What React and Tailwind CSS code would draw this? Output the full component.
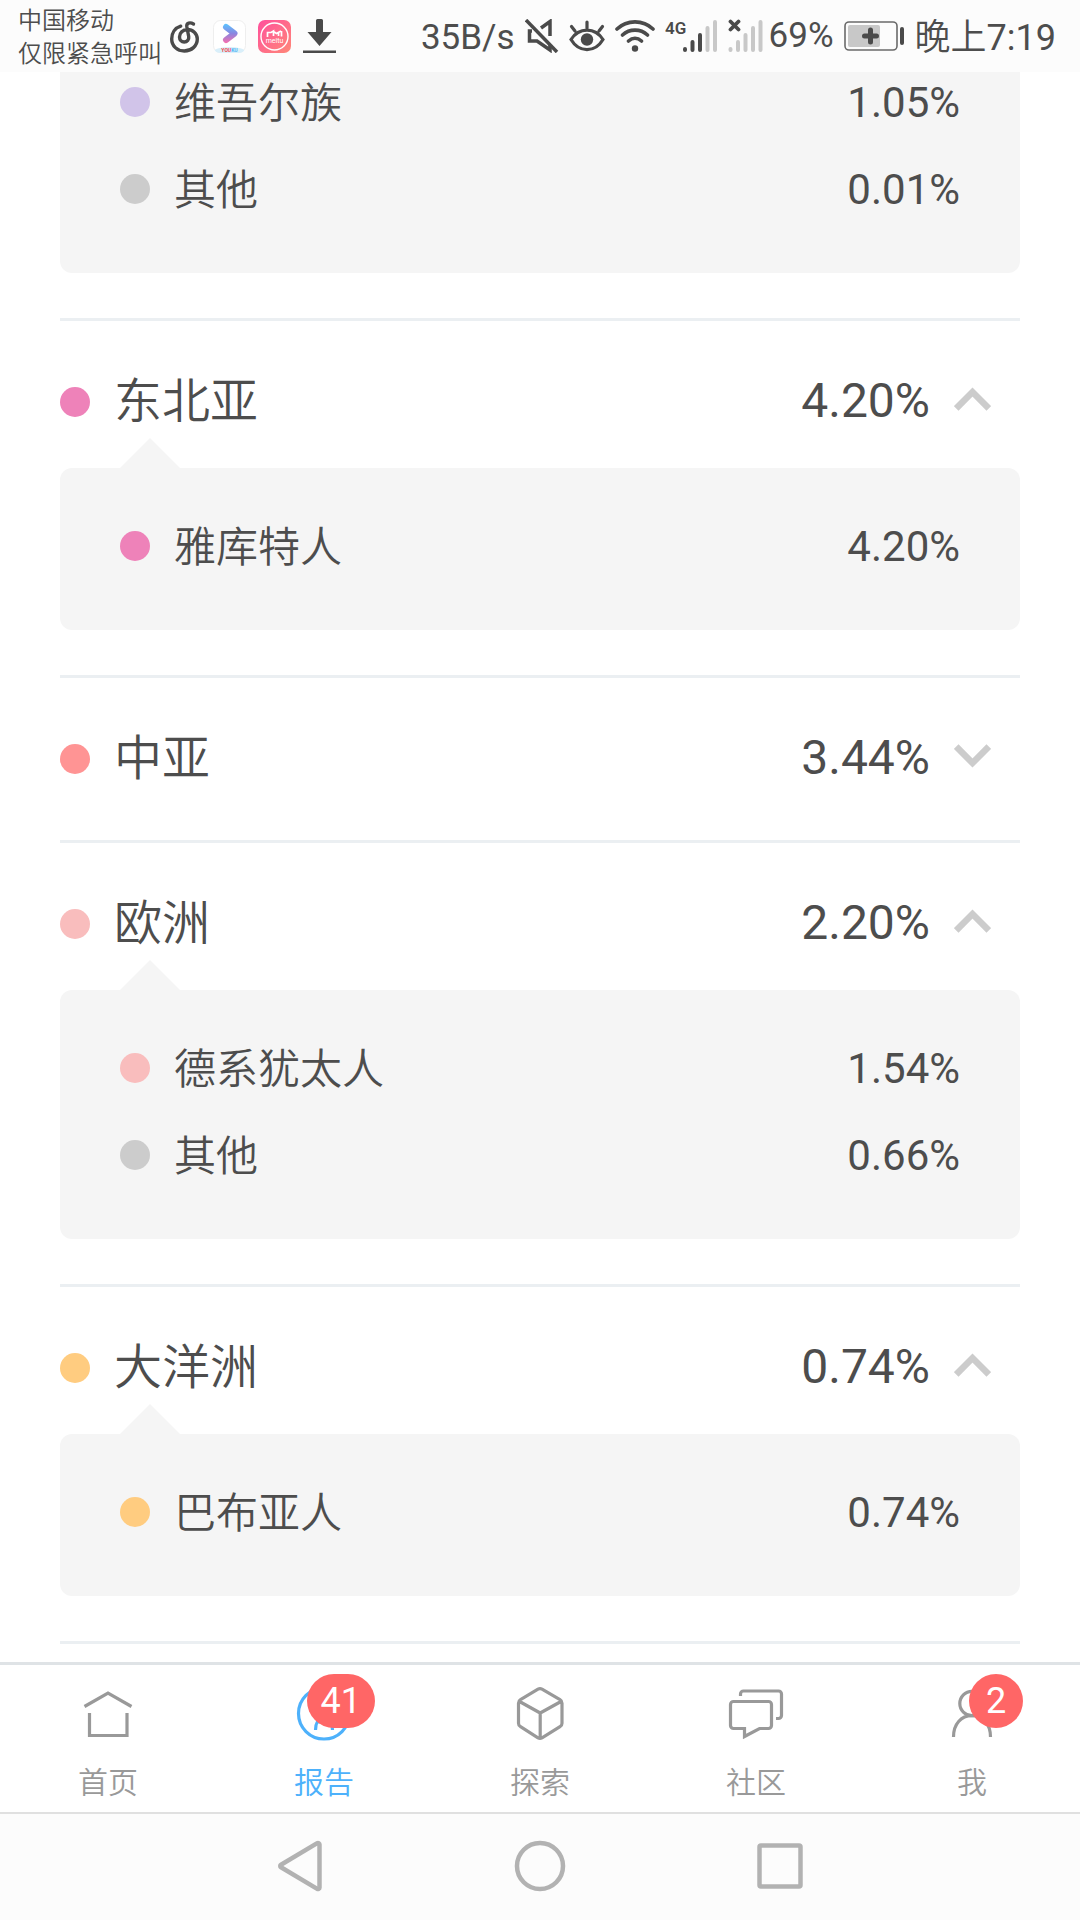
import React, { useState } from 'react';

const GROUPS = [
  {
    name: '东北亚',
    value: '4.20%',
    dot: 'bg-[#ee82b9]',
    open: true,
    items: [{ name: '雅库特人', value: '4.20%', dot: 'bg-[#ee82b9]' }],
  },
  {
    name: '中亚',
    value: '3.44%',
    dot: 'bg-[#ff9494]',
    open: false,
    items: [],
  },
  {
    name: '欧洲',
    value: '2.20%',
    dot: 'bg-[#f9bdbd]',
    open: true,
    items: [
      { name: '德系犹太人', value: '1.54%', dot: 'bg-[#f9bdbd]' },
      { name: '其他', value: '0.66%', dot: 'bg-[#cccccc]' },
    ],
  },
  {
    name: '大洋洲',
    value: '0.74%',
    dot: 'bg-[#ffcc80]',
    open: true,
    items: [{ name: '巴布亚人', value: '0.74%', dot: 'bg-[#ffcc80]' }],
  },
];

const EAST_ASIA_REST = [
  { name: '维吾尔族', value: '1.05%', dot: 'bg-[#d1c4e9]' },
  { name: '其他', value: '0.01%', dot: 'bg-[#cccccc]' },
];

const StatusBar = () => (
  <header className="relative z-10 flex h-[72px] shrink-0 items-center bg-[#fcfcfc] pl-[18px] pr-6 text-[35px] text-[#4d4d4d]">
    <div className="pt-1 text-2xl leading-[33px] font-[350]">
      <p>中国移动</p>
      <p>仅限紧急呼叫</p>
    </div>
    <div className="ml-[6px] flex items-center gap-3">
      {/* music */}
      <svg viewBox="0 0 33 33" className="size-[33px]" fill="none" stroke="#4a4a4a" strokeWidth="3.4" strokeLinecap="round">
        <path d="M12.700 6.200C7 8 3.700 13 3.700 19c0 7 5.500 12 12.600 12s13-5 13-12c0-5.500-4.500-9.500-10-9.500-4.500 0-7.800 3.500-7.800 7.500 0 3 2 5 4.700 5 3 0 5-2.500 4.500-5.500L18.800 6.500C18.300 3 22 1.800 25.500 4" />
      </svg>
      {/* video */}
      <svg viewBox="0 0 33 33" className="size-[33px]">
        <defs>
          <linearGradient id="play" gradientUnits="userSpaceOnUse" x1="12" y1="4" x2="12" y2="23">
            <stop offset="0" stopColor="#5cc3ff" />
            <stop offset=".5" stopColor="#8a86e0" />
            <stop offset="1" stopColor="#f66fae" />
          </linearGradient>
          <clipPath id="tile">
            <rect width="33" height="33" rx="7" />
          </clipPath>
        </defs>
        <rect x=".5" y=".5" width="32" height="32" rx="7" fill="#fff" stroke="#eee" />
        <path d="M13 7l8.500 6.500L13 20" fill="none" stroke="url(#play)" strokeWidth="6" strokeLinecap="round" strokeLinejoin="round" />
        <ellipse cx="16.500" cy="31" rx="15" ry="4" fill="#d9effa" clipPath="url(#tile)" />
        <text x="16.500" y="31.500" fontSize="5" fontWeight="700" textAnchor="middle" fill="#f04a4a">YOU<tspan fill="#4db4f5">KU</tspan></text>
      </svg>
      {/* camera */}
      <svg viewBox="0 0 33 33" className="size-[33px]">
        <defs>
          <linearGradient id="pink" x1="0" y1="0" x2="1" y2="1">
            <stop offset="0" stopColor="#ff4f9c" />
            <stop offset="1" stopColor="#ff8878" />
          </linearGradient>
        </defs>
        <rect width="33" height="33" rx="7" fill="url(#pink)" />
        <circle cx="16.500" cy="16.500" r="13.500" fill="none" stroke="#fff" strokeWidth="1.400" />
        <path d="M9.500 17v-4.500h3.500l2.500-1.500v5M15.500 11.500l3 2 4.500-2.500M20.500 12.500V16M23.500 11v5.500" fill="none" stroke="#fff" strokeWidth="1.700" />
        <text x="16.500" y="23" fontSize="7" textAnchor="middle" fill="#fff">meitu</text>
      </svg>
      {/* download */}
      <svg viewBox="0 0 33 34" className="h-[34px] w-[33px]" fill="#4a4a4a">
        <path d="M14.500 0h4a1.500 1.500 0 0 1 1.500 1.500V13h8.500L16.500 27 4.500 13H13V1.500A1.500 1.500 0 0 1 14.500 0z" />
        <rect y="31.500" width="33" height="2.500" />
      </svg>
    </div>

    <div className="ml-auto flex items-center gap-[10px]">
      <span className="pt-1">35B/s</span>
      {/* muted */}
      <svg viewBox="0 0 34 34" className="size-[34px]" fill="none" stroke="#4a4a4a" strokeWidth="3.500">
        <path d="M7 12H4.500v10H12L25 31V26M16 9l9-6.500V17" />
        <path d="M1 1l31 32" />
      </svg>
      {/* eye care */}
      <svg viewBox="0 0 36 34" className="h-[34px] w-[36px]" fill="none" stroke="#4a4a4a" strokeWidth="3.200" strokeLinecap="round">
        <path d="M2 20.500C10 8 26 8 34 20.500 26 34 10 34 2 20.500zM18 9V3M6 12L2.500 7.500M30 12l3.500-4.500" />
        <circle cx="18" cy="20.500" r="6.200" fill="#4a4a4a" stroke="none" />
      </svg>
      {/* wifi */}
      <svg viewBox="0 0 40 34" className="h-[34px] w-[40px]" fill="none" stroke="#4a4a4a" strokeWidth="3.600" strokeLinecap="round">
        <path d="M2 10C12 .5 28 .5 38 10M7.500 16c7-6.500 18-6.500 25 0M13.500 22c4-3.500 9-3.500 13 0" />
        <circle cx="20" cy="29.500" r="3.200" fill="#4a4a4a" stroke="none" />
      </svg>
      {/* sim 1 */}
      <svg viewBox="0 0 53 34" className="h-[34px] w-[53px]" fill="none" strokeWidth="4" strokeLinecap="round">
        <path d="M20 30v1M27.500 23v8M35 16v15" stroke="#4a4a4a" />
        <path d="M42.500 9v22M50 3v28" stroke="#c8c8c8" />
        <text x="0" y="15" fontSize="17" fontWeight="600" fill="#4a4a4a">4G</text>
      </svg>
      <div className="flex items-center gap-[6px]">
        {/* sim 2 */}
        <svg viewBox="0 0 35 34" className="h-[34px] w-[35px]" fill="none" stroke="#c8c8c8" strokeWidth="4" strokeLinecap="round">
          <path d="M2.500 30v1M10 23v8M17.500 16v15M25 9v22M32.500 3v28" />
          <path d="M2.500 2.500l8 8M10.500 2.500l-8 8" stroke="#4a4a4a" strokeWidth="3.800" />
        </svg>
        <span>69%</span>
      </div>
      {/* battery */}
      <svg viewBox="0 0 61 30" className="h-[30px] w-[61px]">
        <rect x="1" y="1" width="52" height="28" rx="4" fill="none" stroke="#6a6a6a" strokeWidth="1.600" />
        <rect x="4" y="4" width="32" height="22" rx="2" fill="#c8c8c8" />
        <rect x="56" y="6" width="4" height="18" rx="2" fill="#4a4a4a" />
        <path d="M20.500 15h12M26.500 9v12" stroke="#4a4a4a" strokeWidth="5" strokeLinecap="round" />
      </svg>
      <span className="pt-1 text-4xl font-[350]">
        晚上<span className="font-normal">7:19</span>
      </span>
    </div>
  </header>
);

const Item = ({ name, value, dot }) => (
  <li className="flex h-[87px] items-center text-[42px] leading-[60px]">
    <span className={`mr-6 size-[30px] rounded-full ${dot}`} />
    <span className="pt-1 font-[350]">{name}</span>
    <span className="ml-auto pt-[2px]">{value}</span>
  </li>
);

const Chevron = ({ open }) => (
  <svg viewBox="0 0 37 24" className="mb-[6px] h-6 w-[37px]" fill="none" stroke="#cccccc" strokeWidth="6.500">
    <path d={open ? 'M2.200 21.500L18.500 5l16.300 16.500' : 'M2.200 2.500L18.500 19 34.800 2.500'} />
  </svg>
);

const Group = ({ group }) => {
  const [open, setOpen] = useState(group.open);

  return (
    <section className={`border-b-[3px] border-[#ebeff2] ${open ? 'pb-[45px]' : ''}`}>
      <button
        type="button"
        onClick={() => setOpen(!open)}
        className={`flex w-full items-center pr-[29px] text-5xl ${open ? 'h-[147px] pt-[15px]' : 'h-[162px]'}`}
      >
        <span className={`mr-6 size-[30px] rounded-full ${group.dot}`} />
        <span className="font-[350]">{group.name}</span>
        <span className="mr-6 ml-auto pb-[2px]">{group.value}</span>
        <Chevron open={open} />
      </button>
      {open && (
        <div className="relative rounded-xl bg-[#f5f5f5] px-[60px] pt-[34px] pb-[41px]">
          <svg viewBox="0 0 60 30" className="absolute -top-[30px] left-[60px] h-[30px] w-[60px]" fill="#f5f5f5">
            <path d="M0 30L30 0l30 30z" />
          </svg>
          <ul>
            {group.items.map((item) => (
              <Item key={item.name} {...item} />
            ))}
          </ul>
        </div>
      )}
    </section>
  );
};

const HomeIcon = () => (
  <path d="M6.500 22.500L30 9l23.500 13.500M11.500 29v22.500h37.500V29" />
);

const ReportIcon = () => (
  <>
    <circle cx="30" cy="29.500" r="25.500" />
    <path d="M21.500 46c0-8 3-12 8.500-16s8.500-8 8.500-16M21.500 14c0 8 3 12 8.500 16s8.500 8 8.500 16M24 38h12" />
  </>
);

const CubeIcon = () => (
  <path
    d="M28 5.200a4 4 0 0 1 4 0L50 15.700a4 4 0 0 1 2 3.500v20a4 4 0 0 1-2 3.500L32 53.800a4 4 0 0 1-4 0L10.500 42.700a4 4 0 0 1-2-3.500v-20a4 4 0 0 1 2-3.500zM9.500 17.500L30.200 29l20.800-11.500M30.200 29v25"
    strokeLinejoin="round"
  />
);

const ChatIcon = () => (
  <>
    <path d="M7.500 17.500h35a3 3 0 0 1 3 3v21a3 3 0 0 1-3 3H33.500L18.500 52.500v-8H7.500a3 3 0 0 1-3-3v-21a3 3 0 0 1 3-3z" />
    <path d="M14.500 12v-2a3 3 0 0 1 3-3h35a3 3 0 0 1 3 3v21.500a3 3 0 0 1-3 3H50" />
  </>
);

const UserIcon = () => (
  <>
    <circle cx="30" cy="19.500" r="12.200" />
    <path d="M11.500 53C11.500 40 19 31.700 30 31.700S48.500 40 48.500 53" />
  </>
);

const TABS = [
  { label: '首页', icon: HomeIcon },
  { label: '报告', icon: ReportIcon, badge: 41, active: true },
  { label: '探索', icon: CubeIcon },
  { label: '社区', icon: ChatIcon },
  { label: '我', icon: UserIcon, badge: 2 },
];

const TabBar = () => (
  <nav className="grid shrink-0 grid-cols-5 border-t-[3px] border-[#dfe3e6] bg-white">
    {TABS.map(({ label, icon: Icon, badge, active }) => (
      <a
        key={label}
        href="#"
        className={`relative flex h-[147px] flex-col items-center pt-[19px] text-3xl ${active ? 'text-[#4db1fb]' : 'text-[#999999]'}`}
      >
        <svg viewBox="0 0 60 60" className="size-[60px]" fill="none" stroke="currentColor" strokeWidth="3.200">
          <Icon />
        </svg>
        <span className="mt-[21px] font-[350]">{label}</span>
        {badge && (
          <span className="absolute top-[9px] right-[calc(50%-51px)] flex h-[54px] min-w-[54px] items-center justify-center rounded-full bg-[#ff6666] px-[14px] text-4xl text-white">
            {badge}
          </span>
        )}
      </a>
    ))}
  </nav>
);

const NAV_KEYS = [
  { label: '返回', d: 'M49.500 8.500v43a1.500 1.500 0 0 1-2.300 1.300L11 31.300a1.500 1.500 0 0 1 0-2.600L47.200 7.200a1.500 1.500 0 0 1 2.300 1.300z' },
  { label: '主屏幕', d: 'M30 7a23 23 0 1 0 0 46 23 23 0 1 0 0-46z' },
  { label: '最近任务', d: 'M11 9.500h38a1.500 1.500 0 0 1 1.500 1.500v38a1.500 1.500 0 0 1-1.500 1.500H11a1.500 1.500 0 0 1-1.500-1.500v-38A1.500 1.500 0 0 1 11 9.500z' },
];

const SystemNav = () => (
  <div className="flex h-[108px] shrink-0 items-center justify-center border-t-2 border-[#e0e0e0] bg-[#fcfcfc] pb-[2px]">
    {NAV_KEYS.map(({ label, d }) => (
      <button key={label} type="button" aria-label={label} className="flex w-60 justify-center">
        <svg viewBox="0 0 60 60" className="size-[60px]" fill="none" stroke="#b2b2b2" strokeWidth="4.500">
          <path d={d} />
        </svg>
      </button>
    ))}
  </div>
);

const App = () => {
  return (
    <div className="flex h-screen flex-col overflow-hidden bg-white font-['Roboto','Noto_Sans_CJK_SC',sans-serif] text-[#4d4d4d]">
      <StatusBar />

      <main className="min-h-0 flex-1 overflow-hidden px-[60px]">
        {/* tail of the previous group, scrolled under the status bar */}
        <section className="-mt-[14px] border-b-[3px] border-[#ebeff2] pb-[45px]">
          <ul className="rounded-b-xl bg-[#f5f5f5] px-[60px] pb-[41px]">
            {EAST_ASIA_REST.map((item) => (
              <Item key={item.name} {...item} />
            ))}
          </ul>
        </section>
        {GROUPS.map((group) => (
          <Group key={group.name} group={group} />
        ))}
      </main>

      <TabBar />
      <SystemNav />
    </div>
  );
};

export default App;
